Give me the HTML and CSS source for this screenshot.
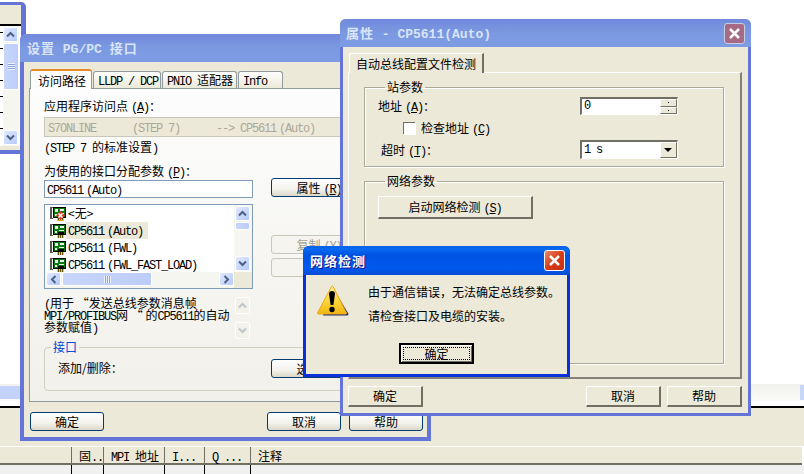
FILE: index.html
```html
<!DOCTYPE html>
<html>
<head>
  <title>设置 PG/PC 接口</title>
  <link rel="stylesheet" href="styles.css">
</head>
<body>
  <svg class="defs" width="0" height="0">
    <symbol id="up" viewBox="0 0 9 7"><path d="M1 5.500 4.500 2 8 5.500" fill="none" stroke="#4d6185" stroke-width="2"/></symbol>
    <symbol id="down" viewBox="0 0 9 7"><path d="M1 1.500 4.500 5 8 1.500" fill="none" stroke="#4d6185" stroke-width="2"/></symbol>
    <symbol id="left" viewBox="0 0 7 9"><path d="M5.500 1 2 4.500 5.500 8" fill="none" stroke="#4d6185" stroke-width="2"/></symbol>
    <symbol id="right" viewBox="0 0 7 9"><path d="M1.500 1 5 4.500 1.500 8" fill="none" stroke="#4d6185" stroke-width="2"/></symbol>
    <symbol id="nic" viewBox="0 0 16 16">
      <path d="M0 1h2v12H0zM2 1h1v1H2zM2 12h1v1H2z" fill="#555"/>
      <path d="M3 1h13v11H3z" fill="#000"/>
      <path d="M4 2h11v9H4z" fill="#0c7a14"/>
      <path d="M5 3h3v3H5zM10 3h4v2H10zM5 8h2v2H5zM9 7h5v1H9z" fill="#eef4e8"/>
      <path d="M8 9h6v2H8z" fill="#000"/>
      <path d="M7 12h7v3H7z" fill="#e8d81a"/>
      <path d="M8.500 12v3M10.500 12v3M12.500 12v3" stroke="#5a5200"/>
    </symbol>
  </svg>

  <!-- application behind the dialogs -->
  <div class="app">
    <div class="app-blank"></div>
    <div class="app-hscroll">
      <div class="app-thumb"></div>
      <div class="app-scrollbtn"></div>
    </div>
    <div class="app-bar"></div>
    <div class="cols cols-head">
      <div class="col"></div>
      <div class="col">固<span class="l">..</span></div>
      <div class="col"><span class="l">MPI </span>地址</div>
      <div class="col"><span class="l">I...</span></div>
      <div class="col"><span class="l">Q ...</span></div>
      <div class="col col-last">注释</div>
    </div>
    <div class="cols cols-row">
      <div class="col"></div>
      <div class="col"></div>
      <div class="col"></div>
      <div class="col"></div>
      <div class="col"></div>
      <div class="col col-last"></div>
    </div>
  </div>

  <!-- small window at top left -->
  <div class="win-back">
    <div class="back-head"></div>
    <div class="back-body">
      <div class="back-ticks">
        <i></i><i></i><i></i><i></i><i></i><i></i><i></i>
      </div>
      <div class="sb-v back-sb">
        <div class="sb-btn"><svg width="9" height="7"><use href="#up"/></svg></div>
        <div class="sb-thumb back-thumb"><span class="grip"></span></div>
        <div class="sb-space"></div>
        <div class="sb-btn"><svg width="9" height="7"><use href="#down"/></svg></div>
      </div>
    </div>
  </div>

  <!-- set PG/PC interface -->
  <div class="win win-pg">
    <div class="title title-off">设置<span class="l"> PG/PC </span>接口</div>
    <div class="client">
      <div class="tabs">
        <div class="tab tab-on">访问路径</div>
        <div class="tab tab-2"><span class="l">LLDP / DCP</span></div>
        <div class="tab tab-3"><span class="l">PNIO </span>适配器</div>
        <div class="tab tab-4"><span class="l">Info</span></div>
      </div>
      <div class="panel">
        <div class="lbl">应用程序访问点<span class="l gap">(<u>A</u>)</span>：</div>
        <div class="access"><span class="l">S7ONLINE &nbsp; &nbsp; &nbsp;(STEP 7) &nbsp; &nbsp; &nbsp;--&gt; CP5611<span class="gap">(Auto)</span></span></div>
        <div class="lbl note"><span class="l">(STEP 7 </span>的标准设置<span class="l">)</span></div>
        <div class="lbl assign">为使用的接口分配参数<span class="l gap">(<u>P</u>)</span>：</div>
        <div class="assign-row">
          <div class="field"><span class="l">CP5611<span class="gap">(Auto)</span></span></div>
          <div class="btn">属性<span class="l gap">(<u>R</u>)...</span></div>
        </div>
        <div class="list-row">
          <div class="list">
            <div class="list-top">
              <div class="items">
                <div class="item">
                  <svg class="nic" width="16" height="16">
                    <use href="#nic"/>
                    <path d="M10.500 5 15 9.500 10.500 14 6 9.500z" fill="#e23a20"/>
                    <path d="M8.500 7.500l4 4M12.500 7.500l-4 4" stroke="#fff" stroke-width="1.500"/>
                    <path d="M7 14h6v1H7z" fill="#f0a010"/>
                  </svg>
                  <span class="item-text">&lt;无&gt;</span>
                </div>
                <div class="item">
                  <svg class="nic" width="16" height="16"><use href="#nic"/></svg>
                  <span class="item-text item-sel"><span class="l">CP5611<span class="gap">(Auto)</span></span></span>
                </div>
                <div class="item">
                  <svg class="nic" width="16" height="16"><use href="#nic"/></svg>
                  <span class="item-text"><span class="l">CP5611<span class="gap">(FWL)</span></span></span>
                </div>
                <div class="item">
                  <svg class="nic" width="16" height="16"><use href="#nic"/></svg>
                  <span class="item-text"><span class="l">CP5611<span class="gap">(FWL_FAST_LOAD)</span></span></span>
                </div>
              </div>
              <div class="sb-v list-sb">
                <div class="sb-btn"><svg width="9" height="7"><use href="#up"/></svg></div>
                <div class="sb-thumb list-thumb"></div>
                <div class="sb-space"></div>
                <div class="sb-btn"><svg width="9" height="7"><use href="#down"/></svg></div>
              </div>
            </div>
            <div class="list-bottom">
              <div class="sb-h">
                <div class="sb-btn"><svg width="7" height="9"><use href="#left"/></svg></div>
                <div class="sb-thumb h-thumb"><span class="grip grip-v"></span></div>
                <div class="sb-space"></div>
                <div class="sb-btn"><svg width="7" height="9"><use href="#right"/></svg></div>
              </div>
              <div class="corner"></div>
            </div>
          </div>
          <div class="side-btns">
            <div class="btn btn-off">复制<span class="l gap">(<u>Y</u>)...</span></div>
            <div class="btn btn-off">删除<span class="l gap">(<u>L</u>)</span></div>
          </div>
        </div>
        <div class="desc-row">
          <div class="desc"><span class="l">(</span>用于 “发送总线参数消息帧<br><span class="l">MPI/PROFIBUS</span>网 “ 的<span class="l">CP5611</span>的自动<br>参数赋值<span class="l">)</span></div>
          <div class="sb-v desc-sb">
            <div class="sb-btn sb-off"><svg width="9" height="7"><use href="#up"/></svg></div>
            <div class="sb-space"></div>
            <div class="sb-btn sb-off"><svg width="9" height="7"><use href="#down"/></svg></div>
          </div>
        </div>
        <fieldset class="if-group">
          <legend>接口</legend>
          <div class="if-row">
            <span>添加/删除：</span>
            <div class="btn">选择<span class="l gap">(<u>C</u>)...</span></div>
          </div>
        </fieldset>
      </div>
      <div class="foot">
        <div class="btn btn-foot">确定</div>
        <div class="foot-right">
          <div class="btn btn-foot">取消</div>
          <div class="btn btn-foot">帮助</div>
        </div>
      </div>
    </div>
  </div>

  <!-- properties -->
  <div class="win win-prop">
    <div class="title title-off title-prop">
      <span>属性<span class="l"> - CP5611(Auto)</span></span>
      <div class="close close-off"><svg width="13" height="13"><path d="M2 2l9 9M11 2l-9 9" stroke="#fff" stroke-width="2.500"/></svg></div>
    </div>
    <div class="client client-prop">
      <div class="ctab">自动总线配置文件检测</div>
      <div class="cpanel">
        <fieldset class="grp grp-station">
          <legend>站参数</legend>
          <div class="prow">
            <span>地址<span class="l gap">(<u>A</u>)</span>：</span>
            <div class="spin">
              <span class="l">0</span>
              <div class="spin-btns"><i></i><i></i></div>
            </div>
          </div>
          <div class="check-row">
            <div class="check"></div>
            <span>检查地址<span class="l gap">(<u>C</u>)</span></span>
          </div>
          <div class="prow prow-time">
            <span class="time-lbl">超时<span class="l gap">(<u>T</u>)</span>：</span>
            <div class="combo">
              <span class="l">1 s</span>
              <div class="combo-btn"></div>
            </div>
          </div>
        </fieldset>
        <fieldset class="grp grp-net">
          <legend>网络参数</legend>
          <div class="cbtn cbtn-start">启动网络检测<span class="l gap">(<u>S</u>)</span></div>
        </fieldset>
      </div>
      <div class="prop-foot">
        <div class="cbtn cbtn-foot">确定</div>
        <div class="prop-foot-right">
          <div class="cbtn cbtn-foot">取消</div>
          <div class="cbtn cbtn-foot">帮助</div>
        </div>
      </div>
    </div>
  </div>

  <!-- network check message -->
  <div class="win win-msg">
    <div class="title title-on">
      <span>网络检测</span>
      <div class="close close-on"><svg width="13" height="13"><path d="M2 2l9 9M11 2l-9 9" stroke="#fff" stroke-width="2.500"/></svg></div>
    </div>
    <div class="msg-body">
      <div class="msg-main">
        <svg class="warn" width="32" height="33" viewBox="0 0 32 33">
          <defs>
            <linearGradient id="warn-fill" x1="0" y1="0" x2="0" y2="1">
              <stop offset="0" stop-color="#fff0a0"/>
              <stop offset="0.5" stop-color="#fcd73c"/>
              <stop offset="1" stop-color="#f2b414"/>
            </linearGradient>
          </defs>
          <path d="M16 3 31 28a1.500 1.500 0 0 1-1.500 2.500H6z" fill="#1d2a6c"/>
          <path d="M14.500 1.500a1 1 0 0 1 1.500 0L29 27a1 1 0 0 1-1 2H2a1 1 0 0 1-1-2z" fill="url(#warn-fill)" stroke="#eaa818" stroke-linejoin="round"/>
          <path d="M12 9a3 3 0 0 1 6 0l-1.600 11h-2.800z" fill="#000"/>
          <circle cx="15" cy="24.500" r="2.700" fill="#000"/>
        </svg>
        <div class="msg-text">
          <p>由于通信错误，无法确定总线参数。</p>
          <p>请检查接口及电缆的安装。</p>
        </div>
      </div>
      <div class="ok"><span class="ok-in">确定</span></div>
    </div>
  </div>
</body>
</html>
```

FILE: styles.css
```css
html, body {
  margin: 0;
  padding: 0;
}
body {
  position: relative;
  width: 804px;
  height: 474px;
  overflow: hidden;
  background: #fff;
  font-family: "Noto Sans CJK SC", sans-serif;
  font-size: 12px;
  line-height: 12px;
  color: #000;
}
.defs {
  position: absolute;
}
.l {
  font-family: "Liberation Mono", monospace;
  font-size: 12px;
  line-height: 0;
  letter-spacing: -1.2px;
}
.gap {
  margin-left: 3px;
}

/* background app */
.app {
  display: flex;
  flex-direction: column;
  height: 474px;
}
.app-blank {
  height: 385px;
}
.app-hscroll {
  display: flex;
  justify-content: space-between;
  height: 17px;
  background: linear-gradient(#f0f0ec, #fbfbf9);
}
.app-thumb {
  width: 40px;
  margin: 2px 0;
  background: #c3d3fb;
}
.app-scrollbtn {
  width: 4px;
  margin: 1px 0;
  background: #c8d6fa;
}
.app-bar {
  margin-top: 5px;
  border-top: 2px solid #000;
  background: #ece9d8;
  height: 38px;
}
.cols {
  display: grid;
  grid-template-columns: 72px 32px 61px 40px 46px 1fr;
}
.cols-head {
  line-height: 18px;
  background: #ece9d8;
  margin-right: 2px;
  border-top: 1px solid #fff;
  border-bottom: 2px solid #716f64;
  height: 16px;
}
.cols-head .col {
  height: 16px;
  padding-left: 7px;
  border-right: 1px solid #716f64;
  white-space: nowrap;
}
.cols-head .col-last {
  border-right: none;
}
.cols-row {
  height: 9px;
  background: #f0f0f0;
}
.cols-row .col {
  border-right: 1px solid #000;
}
.cols-row .col-last {
  border-right: none;
}

/* little window top left */
.win-back {
  position: absolute;
  left: 0;
  top: 2px;
  width: 21px;
  height: 145px;
  background: #ece9d8;
  border: solid #6375d6;
  border-width: 3px 5px 4px 0;
  border-top-right-radius: 5px;
}
.back-head {
  height: 19px;
  border-bottom: 2px solid #000;
}
.back-body {
  display: flex;
  height: 120px;
  background: #fff;
}
.back-ticks {
  display: flex;
  flex-direction: column;
  gap: 15px;
  width: 3px;
  padding-top: 6px;
}
.back-ticks i {
  display: block;
  height: 1px;
  background: #000;
}
.back-sb {
  width: 16px;
  height: 120px;
}
.back-thumb {
  height: 47px;
}

/* scrollbars */
.sb-v {
  display: flex;
  flex-direction: column;
  gap: 1px;
  background: #f6f6f1;
  box-sizing: border-box;
  padding: 1px 0;
}
.sb-h {
  display: flex;
  flex: 1;
  gap: 1px;
  background: #f6f6f1;
  padding: 0 0 0 1px;
}
.sb-btn {
  display: flex;
  align-items: center;
  justify-content: center;
  flex: none;
  width: 15px;
  height: 15px;
  border: 1px solid #fff;
  border-radius: 2px;
  box-sizing: border-box;
  background: linear-gradient(135deg, #e1eafe, #b6cafa);
}
.sb-h .sb-btn {
  height: 14px;
}
.sb-off {
  background: #f2f1ea;
  height: 17px;
}
.sb-off svg {
  opacity: 0.3;
}
.sb-thumb {
  display: flex;
  align-items: center;
  justify-content: center;
  flex: none;
  box-sizing: border-box;
  border: 1px solid #fff;
  border-radius: 2px;
  background: linear-gradient(90deg, #c8d6fb, #bccdf9);
}
.sb-space {
  flex: 1;
}
.grip {
  width: 7px;
  height: 7px;
  background: repeating-linear-gradient(#eef3ff 0 1px, #8ea4dc 1px 2px);
}
.grip-v {
  background: repeating-linear-gradient(90deg, #eef3ff 0 1px, #8ea4dc 1px 2px);
}

/* xp windows */
.win {
  position: absolute;
  box-sizing: border-box;
  background: #ece9d8;
  border: solid #6375d6;
  border-width: 0 4px 4px;
  border-radius: 6px 6px 0 0;
}
.win-pg {
  left: 20px;
  top: 34px;
  width: 411px;
  height: 407px;
}
.win-prop {
  left: 340px;
  top: 19px;
  width: 411px;
  height: 397px;
  border-width: 0 3px 3px;
}
.win-msg {
  left: 303px;
  top: 246px;
  width: 267px;
  height: 131px;
  border-color: #0831d9;
  border-width: 0 3px 3px;
}
.title {
  display: flex;
  align-items: center;
  justify-content: space-between;
  white-space: pre;
  height: 28px;
  margin: 0 -4px;
  padding: 0 5px 0 7px;
  border-radius: 6px 6px 0 0;
  font-size: 13px;
  font-weight: bold;
  letter-spacing: 1px;
}
.title .l {
  font-size: 13px;
  letter-spacing: 0;
}
.title-off {
  display: block;
  line-height: 28px;
  color: #d8e4f8;
  background: linear-gradient(#7189dc, #7b99e0 50%, #7e9ce4);
}
.title-prop {
  display: flex;
  margin: 0 -3px;
  padding: 0 6px 0 6px;
}
.title-on {
  margin: 0 -3px;
  height: 29px;
  padding: 0 5px 0 7px;
  color: #fff;
  text-shadow: 1px 1px 0 #0f1089;
  background: linear-gradient(#0a5fe8, #0a6af2 10%, #0054e3 30%, #0058ee 80%, #0a4ad0);
}
.close {
  display: flex;
  align-items: center;
  justify-content: center;
  width: 21px;
  height: 21px;
  box-sizing: border-box;
  border: 1px solid #fff;
  border-radius: 3px;
}
.close-off {
  background: #a76a85;
  border-color: #c6cde8;
}
.close-on {
  background: linear-gradient(135deg, #e88a6c, #d83c18 50%, #c83010);
}

/* set PG/PC dialog */
.win-pg .client {
  padding: 7px 4px 0 5px;
}
.tabs {
  display: flex;
  align-items: flex-end;
  height: 19px;
  gap: 1px;
  padding-left: 1px;
}
.tab {
  box-sizing: border-box;
  height: 17px;
  line-height: 16px;
  padding-left: 4px;
  border: 1px solid #919b9c;
  border-bottom: none;
  border-radius: 3px 3px 0 0;
  background: linear-gradient(#fff, #ece9d8);
}
.tab-on {
  position: relative;
  z-index: 1;
  width: 62px;
  height: 20px;
  margin-bottom: -1px;
  padding-left: 7px;
  line-height: 19px;
  border-top: 2px solid #e68b2c;
  background: #fcfcfa;
}
.tab-2 {
  width: 68px;
}
.tab-3 {
  width: 75px;
}
.tab-4 {
  width: 45px;
}
.panel {
  box-sizing: border-box;
  width: 395px;
  height: 314px;
  padding: 11px 14px 0;
  border: 1px solid #919b9c;
  background: linear-gradient(#fdfdfd, #f1f0ea);
}
.lbl {
  height: 12px;
  white-space: pre;
}
.access {
  box-sizing: border-box;
  height: 20px;
  margin: 5px 0 4px;
  width: 340px;
  padding-left: 3px;
  line-height: 18px;
  white-space: nowrap;
  color: #aca899;
  background: #ece9d8;
  border: 1px solid #c9c7ba;
}
.assign {
  margin-top: 12px;
}
.assign-row {
  display: flex;
  gap: 18px;
  margin-top: 1px;
  height: 20px;
}
.field {
  box-sizing: border-box;
  width: 209px;
  height: 18px;
  margin-top: 2px;
  padding-left: 2px;
  line-height: 16px;
  background: #fff;
  border: 1px solid #7f9db9;
}
.btn {
  box-sizing: border-box;
  height: 19px;
  width: 74px;
  line-height: 17px;
  text-align: center;
  white-space: nowrap;
  border: 1px solid #003c74;
  border-radius: 3px;
  background: linear-gradient(#fff, #f3f2ec 60%, #dcd8c8);
}
.assign-row .btn,
.if-row .btn,
.side-btns .btn {
  flex: none;
  width: 114px;
}
.btn-off {
  color: #a1a192;
  border-color: #c9c7ba;
  background: #f5f4ee;
}
.list-row {
  display: flex;
  gap: 18px;
  margin-top: 6px;
}
.list {
  box-sizing: border-box;
  flex: none;
  width: 209px;
  height: 85px;
  border: 1px solid #7f9db9;
  background: #fff;
}
.list-top {
  display: flex;
  height: 67px;
}
.items {
  flex: 1;
  overflow: hidden;
  padding: 0 0 0 5px;
}
.item {
  display: flex;
  align-items: center;
  height: 17px;
  white-space: nowrap;
}
.nic {
  flex: none;
}
.item-text {
  height: 17px;
  line-height: 16px;
  padding: 0 5px 0 2px;
}
.item-sel {
  background: #ece9d8;
}
.list-sb {
  width: 18px;
  padding: 1px 2px 0 1px;
  height: 66px;
}
.list-thumb {
  height: 8px;
}
.list-bottom {
  display: flex;
  height: 16px;
}
.h-thumb {
  width: 90px;
  height: 14px;
}
.corner {
  width: 18px;
  background: #ece9d8;
}
.side-btns {
  display: flex;
  flex-direction: column;
  gap: 4px;
  padding-top: 31px;
}
.desc-row {
  display: flex;
  gap: 0;
  height: 42px;
  margin-top: 8px;
}
.desc {
  width: 191px;
  white-space: pre;
}
.desc-sb {
  width: 15px;
  background: #f4f3ee;
  padding: 0;
}
.if-group {
  box-sizing: border-box;
  width: 360px;
  height: 50px;
  margin: 2px 0 0;
  padding: 0 0 0 13px;
  border: 1px solid #d0d0bf;
  border-radius: 4px;
}
.if-group legend {
  padding: 0 2px;
  margin-left: -7px;
  color: #0046d5;
}
.if-row {
  display: flex;
  justify-content: space-between;
  align-items: center;
  height: 24px;
  margin-top: 3px;
  padding-right: 18px;
}
.foot {
  display: flex;
  justify-content: space-between;
  padding: 10px 4px 0 1px;
  width: 393px;
}
.foot-right {
  display: flex;
  gap: 8px;
}

/* properties dialog */
.client-prop {
  padding: 6px 6px 0 5px;
}
.ctab {
  box-sizing: border-box;
  width: 135px;
  height: 20px;
  margin-left: 1px;
  margin-bottom: -1px;
  line-height: 19px;
  text-align: center;
  position: relative;
  z-index: 1;
  background: #ece9d8;
  border: solid;
  border-width: 1px 2px 0 1px;
  border-color: #fff #716f64 #ece9d8 #fff;
  border-radius: 2px 0 0 0;
}
.cpanel {
  box-sizing: border-box;
  height: 307px;
  padding: 8px 16px 0 15px;
  border: solid;
  border-width: 1px 2px 2px 1px;
  border-color: #fff #848277 #848277 #fff;
}
.grp {
  box-sizing: border-box;
  margin: 0;
  padding: 0;
  border: 1px solid #aca899;
  box-shadow: inset 1px 1px 0 #fff, 1px 1px 0 #fff;
}
.grp legend {
  padding: 0 2px;
  margin-left: 7px;
  height: 12px;
}
.grp-station {
  height: 86px;
  padding: 4px 45px 0 13px;
}
.grp-net {
  height: 189px;
  margin-top: 8px;
  padding: 9px 0 0 13px;
}
.prow {
  display: flex;
  align-items: center;
  justify-content: space-between;
}
.spin {
  display: flex;
  justify-content: space-between;
  box-sizing: border-box;
  width: 98px;
  height: 18px;
  padding-left: 2px;
  background: #fff;
  border: solid;
  border-width: 2px 1px 1px 2px;
  border-color: #716f64 #fff #fff #716f64;
}
.spin .l {
  line-height: 15px;
}
.spin-btns {
  display: flex;
  flex-direction: column;
  width: 17px;
}
.spin-btns i {
  position: relative;
  display: block;
  flex: 1;
  box-sizing: border-box;
  background: #ece9d8;
  border: solid;
  border-width: 1px;
  border-color: #fff #716f64 #716f64 #fff;
}
.spin-btns i::after {
  content: "";
  position: absolute;
  left: 7px;
  top: 2px;
  width: 1px;
  height: 1px;
  background: #000;
}
.check-row {
  display: flex;
  align-items: center;
  gap: 6px;
  height: 12px;
  margin: 7px 0 6px 25px;
}
.check {
  box-sizing: border-box;
  width: 12px;
  height: 12px;
  background: #fff;
  border: solid;
  border-width: 1px 0 0 1px;
  border-color: #716f64;
  box-shadow: 1px 1px 0 #fff;
}
.time-lbl {
  margin-left: 3px;
}
.combo {
  display: flex;
  justify-content: space-between;
  box-sizing: border-box;
  width: 98px;
  height: 19px;
  padding-left: 2px;
  background: #fff;
  border: solid;
  border-width: 2px 1px 1px 2px;
  border-color: #716f64 #fff #fff #716f64;
}
.combo .l {
  line-height: 16px;
}
.combo-btn {
  position: relative;
  width: 17px;
  box-sizing: border-box;
  background: #ece9d8;
  border: solid;
  border-width: 1px;
  border-color: #fff #716f64 #716f64 #fff;
}
.combo-btn::after {
  content: "";
  position: absolute;
  left: 3px;
  top: 5px;
  border: 4px solid transparent;
  border-top: 4px solid #000;
  border-bottom: none;
}
.cbtn {
  box-sizing: border-box;
  text-align: center;
  background: #ece9d8;
  border: solid;
  border-width: 1px 2px 2px 1px;
  border-color: #fff #716f64 #716f64 #fff;
}
.cbtn-start {
  width: 155px;
  height: 23px;
  line-height: 20px;
}
.prop-foot {
  display: flex;
  justify-content: space-between;
  padding: 7px 0 0 0;
}
.prop-foot-right {
  display: flex;
  gap: 6px;
}
.cbtn-foot {
  width: 75px;
  height: 21px;
  line-height: 18px;
}

/* message box */
.msg-body {
  display: flex;
  flex-direction: column;
  align-items: center;
}
.msg-main {
  display: flex;
  align-self: stretch;
  gap: 19px;
  padding: 5px 0 0 11px;
}
.warn {
  flex: none;
  margin-top: 5px;
}
.msg-text p {
  margin: 0;
  height: 24px;
  line-height: 24px;
  white-space: nowrap;
}
.ok {
  box-sizing: border-box;
  width: 75px;
  height: 21px;
  margin-top: 15px;
  padding: 2px;
  background: #ece9d8;
  border: solid;
  border-width: 2px;
  border-color: #000;
  box-shadow: inset 1px 1px 0 #fff, inset -1px -1px 0 #716f64;
}
.ok-in {
  display: block;
  box-sizing: border-box;
  height: 13px;
  line-height: 11px;
  text-align: center;
  border: 1px dotted #000;
}
```
